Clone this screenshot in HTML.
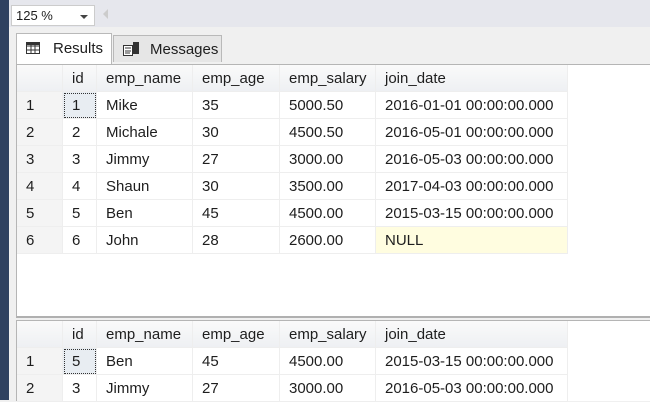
<!DOCTYPE html><html><head><style>
body{margin:0;width:650px;height:400px;overflow:hidden;background:#f0f0f0;font-family:"Liberation Sans",sans-serif;font-size:14px;color:#1e1e1e;position:relative}
.strip{position:absolute;left:0;top:0;width:9px;height:400px;background:#2f4160}
.top{position:absolute;left:9px;top:0;width:641px;height:27px;background:#e6e7ed}
.combo{position:absolute;left:11px;top:5px;width:84px;height:21px;background:#fff;border:1px solid #ccc;box-sizing:border-box;font-size:13px;padding:2px 4px}
.combo:after{content:"";position:absolute;right:6px;top:9px;border:4px solid transparent;border-top:4px solid #444}
.tab{position:absolute;top:35px;height:27px;box-sizing:border-box;border:1px solid #b9b9b9;border-bottom:none;font-size:15px;padding:5px 0 0 0}
.grid{position:absolute;left:16px;width:634px;background:#fff;border-top:1px solid #b5b5b5;border-left:1px solid #b5b5b5}
table{border-collapse:collapse;font-size:15px;table-layout:fixed}
td{height:26px;padding:0 0 0 9px;border-right:1px solid #eee;border-bottom:1px solid #eee;white-space:nowrap;overflow:hidden}
tr.h td{background:linear-gradient(#fafafa,#eef0f3);height:25px;padding-top:1px}
td.n{background:#f4f4f4;padding-left:9px}
td.sel{outline:1px dotted #333;outline-offset:-2px;background:#e8edf2;padding-left:9px}
td.null{background:#fffde0}
</style></head><body>
<div class="strip"></div><div class="top"></div>
<div class="combo">125 %</div>
<div style="position:absolute;left:103px;top:9px;border:5px solid transparent;border-right:5px solid #ccc;border-left:none"></div>
<div class="tab" style="left:16px;width:96px;background:#fff;top:33px;height:31px;padding-top:6px">
<svg style="position:absolute;left:9px;top:8px" width="14" height="12"><rect x="0.5" y="0.5" width="13" height="11" fill="#fff" stroke="#333"/><path d="M0 4h14M0 8h14M5 0v12M9 0v12" stroke="#333"/><rect x="0" y="0" width="14" height="3" fill="#333"/></svg>
<span style="position:absolute;left:36px">Results</span></div>
<div class="tab" style="left:113px;width:109px;background:#e6e6e6">
<svg style="position:absolute;left:8px;top:5px" width="18" height="16"><rect x="1.5" y="4.5" width="9" height="10" fill="#fff" stroke="#333"/><path d="M3 7h6M3 10h6M3 12h5" stroke="#333"/><rect x="11" y="1" width="6" height="12" fill="#333"/></svg>
<span style="position:absolute;left:36px">Messages</span></div>
<div class="grid" style="top:64px;height:251px;border-bottom:2px solid #b0b0b0">
<table>
<tr class="h"><td style="width:36px"></td><td style="width:24px">id</td><td style="width:86px">emp_name</td><td style="width:77px">emp_age</td><td style="width:86px">emp_salary</td><td style="width:182px">join_date</td></tr>
<tr><td class="n">1</td><td class="sel">1</td><td>Mike</td><td>35</td><td>5000.50</td><td>2016-01-01 00:00:00.000</td></tr>
<tr><td class="n">2</td><td>2</td><td>Michale</td><td>30</td><td>4500.50</td><td>2016-05-01 00:00:00.000</td></tr>
<tr><td class="n">3</td><td>3</td><td>Jimmy</td><td>27</td><td>3000.00</td><td>2016-05-03 00:00:00.000</td></tr>
<tr><td class="n">4</td><td>4</td><td>Shaun</td><td>30</td><td>3500.00</td><td>2017-04-03 00:00:00.000</td></tr>
<tr><td class="n">5</td><td>5</td><td>Ben</td><td>45</td><td>4500.00</td><td>2015-03-15 00:00:00.000</td></tr>
<tr><td class="n">6</td><td>6</td><td>John</td><td>28</td><td>2600.00</td><td class="null">NULL</td></tr>
</table></div>
<div class="grid" style="top:320px;height:80px">
<table>
<tr class="h"><td style="width:36px"></td><td style="width:24px">id</td><td style="width:86px">emp_name</td><td style="width:77px">emp_age</td><td style="width:86px">emp_salary</td><td style="width:182px">join_date</td></tr>
<tr><td class="n">1</td><td class="sel">5</td><td>Ben</td><td>45</td><td>4500.00</td><td>2015-03-15 00:00:00.000</td></tr>
<tr><td class="n">2</td><td>3</td><td>Jimmy</td><td>27</td><td>3000.00</td><td>2016-05-03 00:00:00.000</td></tr>
</table></div>
</body></html>
